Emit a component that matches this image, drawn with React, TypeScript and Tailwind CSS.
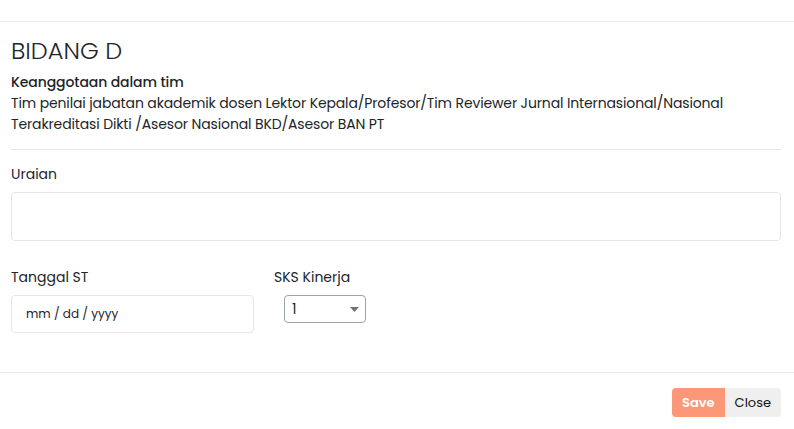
import React from "react";

export default function App() {
  return (
    <div className="w-[794px] h-[429px] bg-white text-[#212529] font-['Poppins','Open_Sans',sans-serif] overflow-hidden">
      <div className="h-[22px] border-b border-[#e9ecef]" />
      <div className="pl-[11px] pr-[13px]">
        <h3 className="mt-[13px] text-[24px] leading-[32px] font-light text-[#212529]">BIDANG D</h3>
        <div className="mt-[5px] text-[14px] leading-[21px] font-medium tracking-[-0.1px]">Keanggotaan dalam tim</div>
        <div className="text-[14px] leading-[21px] font-normal tracking-[-0.13px]">
          Tim penilai jabatan akademik dosen Lektor Kepala/Profesor/Tim Reviewer Jurnal Internasional/Nasional
          <br />
          Terakreditasi Dikti /Asesor Nasional BKD/Asesor BAN PT
        </div>
        <div className="mt-[14px] border-t border-[#e5e7eb]" />
        <div className="mt-[14px] text-[14px] leading-[21px]">Uraian</div>
        <div className="mt-[7px] h-[49px] rounded-[4px] border border-[#e5e7eb]" />
        <div className="mt-[26px] flex">
          <div className="w-[243px]">
            <div className="text-[14px] leading-[21px]">Tanggal ST</div>
            <div className="mt-[7px] h-[38px] rounded-[4px] border border-[#e5e7eb] flex items-center pl-[14px] text-[12px]">
              mm / dd / yyyy
            </div>
          </div>
          <div className="ml-[20px]">
            <div className="text-[14px] leading-[21px]">SKS Kinerja</div>
            <div className="mt-[7px] ml-[10px] w-[82px] h-[28px] rounded-[4px] border border-[#9ca3af] flex items-center justify-between pl-[7px] pr-[6px] text-[14px]">
              <span>1</span>
              <svg width="9" height="5" viewBox="0 0 9 5"><path d="M0 0H9L4.5 5Z" fill="#6b7280" /></svg>
            </div>
          </div>
        </div>
      </div>
      <div className="mt-[39px] border-t border-[#e9ecef]" />
      <div className="mt-[15px] flex justify-end pr-[13px]">
        <button className="h-[29px] px-[10px] rounded-l-[4px] bg-[#fc9878] text-white text-[13px] font-semibold">Save</button>
        <button className="h-[29px] px-[10px] rounded-r-[4px] bg-[#efefef] text-[#111] text-[13px]">Close</button>
      </div>
    </div>
  );
}
